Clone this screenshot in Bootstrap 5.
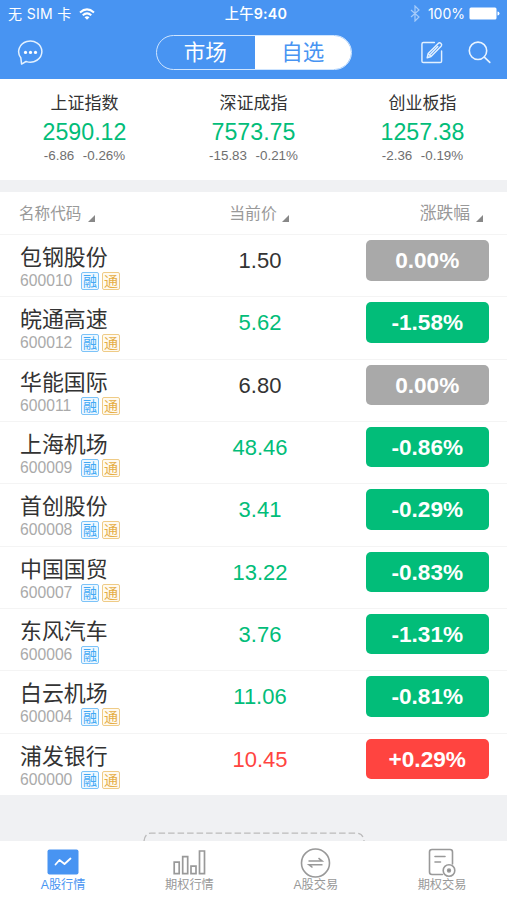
<!DOCTYPE html>
<html lang="zh-CN">
<head>
<meta charset="utf-8">
<meta name="viewport" content="width=device-width, initial-scale=1">
<title>自选</title>
<link rel="stylesheet" href="https://cdn.jsdelivr.net/npm/bootstrap@5.3.0/dist/css/bootstrap.min.css">
<style>
:root{--up:#ff4440;--down:#02bd79;--blue:#4894f2}
body{font-family:"Liberation Sans","Noto Sans CJK SC",sans-serif;background:#f0f1f3;color:#333;height:900px;overflow:hidden}
svg{display:block;flex:none}
.top-area{background:var(--blue);height:79px;color:#fff}
.status{height:27px;font:14px/27px Inter,"Noto Sans CJK SC",sans-serif}
.status>div{flex:1 1 0}
.carrier{letter-spacing:.35px}
.time{font-weight:600;font-size:14.3px;padding-left:5px;letter-spacing:.2px}
.time span{font-weight:500}
.tools{height:52px;padding-bottom:1px}
.tools>div{flex:1 1 0}
.seg{width:196px;height:35px;border:1.5px solid #cfe5ff;border-radius:18px;overflow:hidden}
.seg>div{flex:1;line-height:35px;font-size:21.5px;text-align:center}
.seg>div:first-child{padding-right:1px}
.seg .on{background:#fff;color:var(--blue)}
.indices{height:101px;padding-top:14px}
.indices>div{width:169px;text-align:center}
.ix-name{font-size:17px;line-height:22px}
.ix-val{font-size:23.2px;line-height:28px;margin-top:3px;color:var(--down)}
.ix-diff{font-size:13.4px;line-height:16px;margin-top:2px;color:#6f6f6f;gap:8.5px}
.quotes{margin-top:12px;height:603px}
.heads{height:42px;color:#999;font-size:15.6px;line-height:20px;padding:12px 24px 0 19px}
.heads .mid{margin-left:3px}
.heads .mid span{font-size:15.9px}
.sort{width:0;height:0;border-left:7px solid transparent;border-bottom:7px solid #888;margin:11px 0 0 7px}
.heads .mid .sort{margin-left:5px}
.stock{height:62.33px;border-top:1px solid #f4f4f4;padding:5px 18.5px 0 20px}
.s-info{width:186px}
.s-name{font-size:21.9px;line-height:28px;margin-top:4px}
.s-code{font-size:15.7px;line-height:18px;color:#aaa}
.s-code span{width:52.5px}
.s-code b{font-weight:400;font-size:14px;line-height:16px;width:18px;height:18px;border:1px solid;border-radius:2px;text-align:center}
.s-code .rong{color:#42a9f5;margin-left:8.5px;background:#eff8ff;border-color:#7cc3f8}
.s-code .tong{color:#e5ad45;margin-left:3px;background:#fffaf0;border-color:#efcb86}
.s-price{width:108px;font-size:22px;line-height:41px;text-align:center}
.s-rate{width:122.5px;height:40.5px;line-height:42px;border-radius:5px;font-size:22.6px;font-weight:700;color:#fff;text-align:center;margin-left:52px}
.drop{width:222px;height:9px;margin-top:36.5px}
.tabs{height:59.5px;color:#999;font-size:12.2px;line-height:16px}
.tabs>div{width:126.3px;padding-top:7.5px}
.tabs .cur{color:var(--blue)}
</style>
</head>
<body class="d-flex flex-column">
<header class="top-area">
  <div class="status d-flex px-2">
    <div class="d-flex align-items-center"><span class="carrier">无 SIM 卡</span>
      <svg style="margin-left:7px" width="16" height="12" viewBox="0 0 16 12" fill="none" stroke="#fff" stroke-width="2"><path d="M1 4.5Q8-1.7 15 4.5M3.7 7.2Q8 3.5 12.3 7.2"/><path d="M8 11.8 5.5 9.2Q8 7.2 10.5 9.2Z" fill="#fff" stroke="none"/></svg>
    </div>
    <div class="time text-center"><span>上午</span>9:40</div>
    <div class="d-flex align-items-center justify-content-end">
      <svg width="10" height="17" viewBox="0 0 10 17" fill="none" stroke="#a5cbfa" stroke-width="1.2"><path d="M1 5l8 7-4 4V1l4 4-8 7"/></svg>
      <span style="margin-left:8px">100%</span>
      <svg style="margin-left:4px;margin-right:-1px" width="31" height="13" viewBox="0 0 31 13" fill="#fff"><rect x=".5" y=".5" width="27" height="12" rx="1.5"/><path d="M28.5 4.5q2 .2 2 2t-2 2z"/></svg>
    </div>
  </div>
  <div class="tools d-flex align-items-center">
    <div style="padding-left:17px">
      <svg width="27" height="26" viewBox="0 0 27 26" fill="none" stroke="#e3f1ff" stroke-width="1.5" stroke-linecap="round" stroke-linejoin="round"><path d="M9.5 21.6A11.6 10.6 0 1 0 3.8 17.7L4.6 24.1 9 21.5"/><g fill="#fff" stroke="none"><circle cx="8.5" cy="12.4" r="1.6"/><circle cx="13.5" cy="12.4" r="1.6"/><circle cx="18.5" cy="12.4" r="1.6"/></g></svg>
    </div>
    <div class="seg d-flex flex-grow-0 flex-shrink-0" style="flex-basis:196px"><div>市场</div><div class="on">自选</div></div>
    <div class="d-flex justify-content-end align-items-center" style="padding-right:16px;gap:24px">
      <svg width="24" height="23" viewBox="0 0 24 24" fill="none" stroke="#e3f1ff" stroke-width="1.5" stroke-linecap="round" stroke-linejoin="round"><path d="M14.5 1.5H3Q1.500 1.500 1.500 3V21Q1.500 22.500 3 22.500H20.500Q22 22.500 22 21V10.500"/><path d="M7 17.500 8 13 18.500 2.500Q20 1.200 21.400 2.600T21.500 5.500L11 16.200ZM8 13l3 3.200M10.500 13.500l7.500-7.700"/></svg>
      <svg width="23" height="23" viewBox="0 0 23 23" fill="none" stroke="#e9f4ff" stroke-width="1.6" stroke-linecap="round"><circle cx="10" cy="9.800" r="8.700"/><path d="m16.300 16.100 5.500 5.300"/></svg>
    </div>
  </div>
</header>

<section class="indices bg-white d-flex flex-shrink-0">
  <div><div class="ix-name">上证指数</div><div class="ix-val">2590.12</div><div class="ix-diff d-flex justify-content-center"><span>-6.86</span><span>-0.26%</span></div></div>
  <div><div class="ix-name">深证成指</div><div class="ix-val">7573.75</div><div class="ix-diff d-flex justify-content-center"><span>-15.83</span><span>-0.21%</span></div></div>
  <div><div class="ix-name">创业板指</div><div class="ix-val">1257.38</div><div class="ix-diff d-flex justify-content-center"><span>-2.36</span><span>-0.19%</span></div></div>
</section>

<main class="quotes bg-white flex-shrink-0">
  <div class="heads d-flex justify-content-between">
    <div class="d-flex"><span>名称代码</span><i class="sort"></i></div>
    <div class="mid d-flex"><span>当前价</span><i class="sort"></i></div>
    <div class="d-flex"><span style="font-size:16.8px">涨跌幅</span><i class="sort" style="margin-left:6px"></i></div>
  </div>
  <div id="stocks"></div>
</main>

<svg class="drop align-self-center" viewBox="0 0 222 9" fill="none" stroke="#bbb" stroke-width="1.3" stroke-dasharray="6.5 3"><path d="M1 9Q2 1.200 8 1.200H214Q220 1.200 221 9"/></svg>

<nav class="tabs bg-white d-flex flex-shrink-0">
  <div class="cur d-flex flex-column align-items-center">
    <svg width="32" height="29" viewBox="0 0 32 29"><rect x=".5" y="1.5" width="31" height="25" rx="2" fill="#4894f2"/><path d="m8.500 16.500 4-4.500 5 4 6-5.500" fill="none" stroke="#fff" stroke-width="1.8" stroke-linecap="round" stroke-linejoin="round"/></svg>
    <span>A股行情</span></div>
  <div class="d-flex flex-column align-items-center">
    <svg width="33" height="29" viewBox="0 0 33 29" fill="none" stroke="#999" stroke-width="1.7"><path d="M1.200 14.200h5v11.500h-5zM9.700 8.700h5v17h-5zM18 18.200h5v7.500h-5zM26.500 3h5v22.700h-5z"/></svg>
    <span>期权行情</span></div>
  <div class="d-flex flex-column align-items-center">
    <svg width="31" height="30" viewBox="0 0 31 30" fill="none" stroke="#999" stroke-width="1.6"><circle cx="15.500" cy="15" r="14"/><path d="M8.500 13H22L18.500 10.200M22.500 16.700H9l3.500 2.800"/></svg>
    <span style="margin-top:-1px">A股交易</span></div>
  <div class="d-flex flex-column align-items-center">
    <svg width="28" height="30" viewBox="0 0 28 30" fill="none" stroke="#999" stroke-width="1.6" stroke-linecap="round"><path d="M14.500 26.500H4Q1.500 26.500 1.500 24V4Q1.500 1.500 4 1.500H22Q24.500 1.500 24.500 4V16M7 8.500h10M7 14h5.500"/><circle cx="21" cy="22.500" r="5.800"/><circle cx="21" cy="22.500" r="1.400" fill="#777"/></svg>
    <span style="margin-top:-1px">期权交易</span></div>
</nav>
<script>
const stocks = [
  ["包钢股份","600010","1.50","0.00%",1],
  ["皖通高速","600012","5.62","-1.58%",1],
  ["华能国际","600011","6.80","0.00%",1],
  ["上海机场","600009","48.46","-0.86%",1],
  ["首创股份","600008","3.41","-0.29%",1],
  ["中国国贸","600007","13.22","-0.83%",1],
  ["东风汽车","600006","3.76","-1.31%",0],
  ["白云机场","600004","11.06","-0.81%",1],
  ["浦发银行","600000","10.45","+0.29%",1]
];
document.getElementById("stocks").innerHTML = stocks.map(([name, code, price, rate, tong]) => {
  const tone = rate[0] === "-" ? "var(--down)" : rate[0] === "+" ? "var(--up)" : "";
  return `<div class="stock d-flex justify-content-between">
    <div class="s-info"><div class="s-name">${name}</div>
      <div class="s-code d-flex"><span>${code}</span><b class="rong">融</b>${tong ? '<b class="tong">通</b>' : ''}</div></div>
    <div class="s-price" style="color:${tone || "#333"}">${price}</div>
    <div class="s-rate" style="background:${tone || "#a9a9a9"}">${rate}</div></div>`;
}).join("");
</script>
<script src="https://cdn.jsdelivr.net/npm/bootstrap@5.3.0/dist/js/bootstrap.bundle.min.js"></script>
</body>
</html>
